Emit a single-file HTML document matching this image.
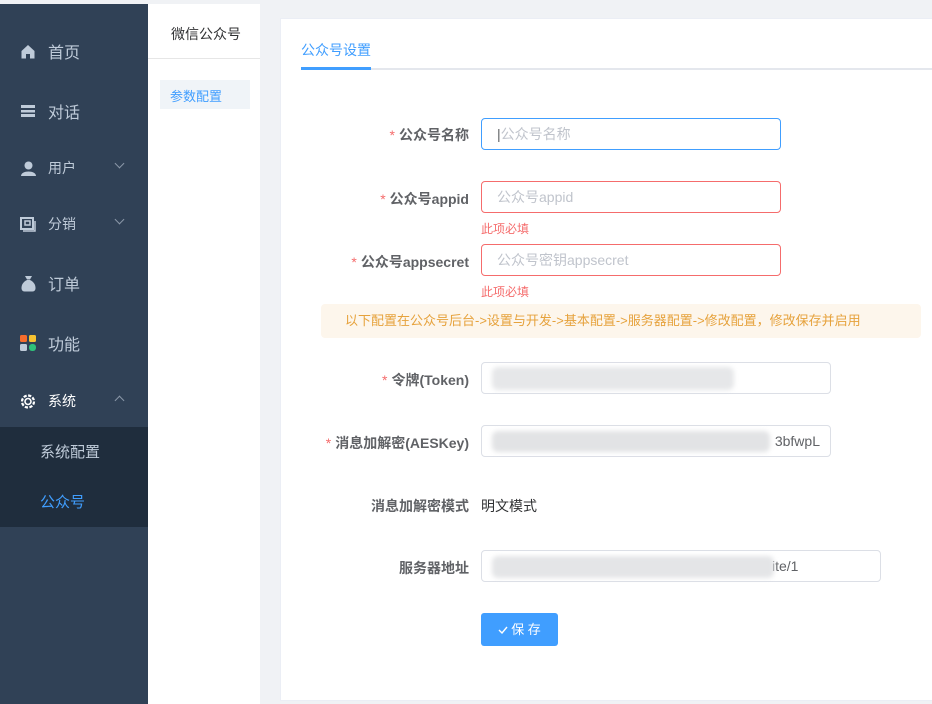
<!DOCTYPE html>
<html><head><meta charset="utf-8"><style>
*{margin:0;padding:0;box-sizing:border-box}
body{width:932px;height:704px;overflow:hidden;background:#f0f2f5;font-family:"Liberation Sans","Noto Sans CJK SC",sans-serif;position:relative}
.abs{position:absolute}
.side{left:0;top:4px;width:148px;height:700px;background:#304156}
.mi{position:absolute;left:20px;color:#bfcbd9;font-size:16px;display:flex;align-items:center}
.mi .ic{width:16px;margin-right:12px;display:inline-flex;align-items:center;justify-content:center}
.sm{font-size:14px}
.arr{position:absolute;left:116px;width:7px;height:7px;border-right:1px solid #8a97a8;border-bottom:1px solid #8a97a8}
.sub{left:0;top:427px;width:148px;height:100px;background:#1f2d3d}
.p2{left:148px;top:4px;width:112px;height:700px;background:#fff}
.card{left:280px;top:18px;width:660px;height:683px;background:#fff;border:1px solid #ebeef5}
.lbl{position:absolute;right:463px;font-size:14px;font-weight:bold;color:#606266;text-align:right;white-space:nowrap}
.lbl b{color:#f56c6c;font-weight:normal;margin-right:4px}
.inp{position:absolute;left:481px;height:32px;border:1px solid #dcdfe6;border-radius:4px;background:#fff;font-size:14px;color:#c0c4cc;padding-left:15px;line-height:30px}
.err{position:absolute;left:481px;font-size:12px;color:#f56c6c}
.blur{position:absolute;background:#ddd;filter:blur(2.5px);border-radius:6px}
</style></head><body>
<div class="abs side"></div>
<div class="abs sub"></div>
<div class="mi" style="top:39px"><span class="ic"><svg width="16" height="15" viewBox="0 0 16 15"><path d="M8 1L1.5 7v7.5h4.5V10h4v4.5h4.5V7z" fill="#bfcbd9"/></svg></span>首页</div>
<div class="mi" style="top:99px"><span class="ic"><svg width="14" height="12"><rect y="0" width="14" height="3" fill="#bfcbd9"/><rect y="5" width="14" height="2.5" fill="#bfcbd9"/><rect y="9" width="14" height="3" fill="#bfcbd9"/></svg></span>对话</div>
<div class="mi sm" style="top:158px"><span class="ic"><svg width="15" height="15"><circle cx="7.5" cy="4.5" r="4" fill="#bfcbd9"/><path d="M0 15c0-6 15-6 15 0z" fill="#bfcbd9"/></svg></span>用户</div>
<div class="arr" style="top:160px;transform:rotate(45deg)"></div>
<div class="mi sm" style="top:214px"><span class="ic"><svg width="16" height="15"><rect x="1" y="1" width="12" height="11" fill="none" stroke="#bfcbd9" stroke-width="2"/><rect x="5" y="4" width="5" height="4" fill="none" stroke="#bfcbd9" stroke-width="1.5"/><path d="M3 14h12V4" stroke="#bfcbd9" stroke-width="1.5" fill="none"/></svg></span>分销</div>
<div class="arr" style="top:216px;transform:rotate(45deg)"></div>
<div class="mi" style="top:271px"><span class="ic"><svg width="15" height="17"><path d="M4 1h7l-2 3.5h-3z" fill="#bfcbd9"/><path d="M6 5h3c4 2 5.5 5 5.5 8 0 2-1 3.5-3 3.5h-8c-2 0-3-1.5-3-3.5 0-3 1.5-6 5.5-8z" fill="#bfcbd9"/></svg></span>订单</div>
<div class="mi" style="top:331px"><span class="ic"><svg width="16" height="16"><rect x="0" y="0" width="7" height="7" rx="1.5" fill="#f56c2c"/><rect x="9" y="0" width="7" height="7" rx="1.5" fill="#f7c231"/><rect x="0" y="9" width="7" height="7" rx="1.5" fill="#bfcbd9"/><rect x="9" y="9" width="7" height="7" rx="3" fill="#2fc17a"/></svg></span>功能</div>
<div class="mi sm" style="top:391px;color:#fff"><span class="ic"><svg width="17" height="17" viewBox="0 0 16 16"><circle cx="8" cy="8" r="6" fill="none" stroke="#fff" stroke-width="2.2" stroke-dasharray="3.2 1.5"/><circle cx="8" cy="8" r="3" fill="none" stroke="#fff" stroke-width="1.6"/></svg></span>系统</div>
<div class="arr" style="top:397px;transform:rotate(-135deg)"></div>
<div class="abs" style="left:40px;top:441px;font-size:15px;color:#bfcbd9">系统配置</div>
<div class="abs" style="left:40px;top:491px;font-size:15px;color:#409eff">公众号</div>

<div class="abs p2"></div>
<div class="abs" style="left:148px;top:58px;width:112px;height:1px;background:#e6e6e6"></div>
<div class="abs" style="left:171px;top:24px;font-size:14px;color:#303133">微信公众号</div>
<div class="abs" style="left:160px;top:80px;width:90px;height:29px;background:#f0f4f8"></div>
<div class="abs" style="left:170px;top:86px;font-size:13px;color:#409eff">参数配置</div>

<div class="abs card"></div>
<div class="abs" style="left:301px;top:40px;font-size:14px;color:#409eff">公众号设置</div>
<div class="abs" style="left:301px;top:68px;width:631px;height:2px;background:#e4e7ed"></div>
<div class="abs" style="left:301px;top:67px;width:70px;height:3px;background:#409eff"></div>

<div class="lbl" style="top:125px"><b>*</b>公众号名称</div>
<div class="inp" style="top:118px;width:300px;border-color:#409eff"><span style="color:#606266">|</span>公众号名称</div>
<div class="lbl" style="top:189px"><b>*</b>公众号appid</div>
<div class="inp" style="top:181px;width:300px;border-color:#f56c6c">公众号appid</div>
<div class="err" style="top:220px">此项必填</div>
<div class="lbl" style="top:252px"><b>*</b>公众号appsecret</div>
<div class="inp" style="top:244px;width:300px;border-color:#f56c6c">公众号密钥appsecret</div>
<div class="err" style="top:283px">此项必填</div>
<div class="abs" style="left:321px;top:304px;width:600px;height:34px;background:#fdf6ec;border-radius:4px;color:#e6a23c;font-size:13px;line-height:34px;padding-left:24px">以下配置在公众号后台-&gt;设置与开发-&gt;基本配置-&gt;服务器配置-&gt;修改配置，修改保存并启用</div>

<div class="lbl" style="top:370px"><b>*</b>令牌(Token)</div>
<div class="inp" style="top:362px;width:350px"></div>
<div class="blur" style="left:492px;top:367px;width:242px;height:23px;background:#e6e7e9"></div>
<div class="lbl" style="top:433px"><b>*</b>消息加解密(AESKey)</div>
<div class="inp" style="top:425px;width:350px;color:#606266;text-align:right;padding-right:10px">3bfwpL</div>
<div class="blur" style="left:492px;top:431px;width:278px;height:21px;background:#e2e3e5"></div>
<div class="lbl" style="top:496px">消息加解密模式</div>
<div class="abs" style="left:481px;top:496px;font-size:14px;color:#303133">明文模式</div>
<div class="lbl" style="top:558px">服务器地址</div>
<div class="inp" style="top:550px;width:400px;color:#606266"><span style="position:absolute;left:290px">ite/1</span></div>
<div class="blur" style="left:492px;top:556px;width:282px;height:22px;background:#e4e5e7"></div>
<div class="abs" style="left:481px;top:613px;width:77px;height:33px;background:#409eff;border-radius:3px;color:#fff;font-size:13px;line-height:33px;text-align:center"><svg width="10" height="8" style="margin-right:3px"><path d="M1 4l3 3 5-6" stroke="#fff" stroke-width="1.4" fill="none"/></svg>保 存</div>
</body></html>
